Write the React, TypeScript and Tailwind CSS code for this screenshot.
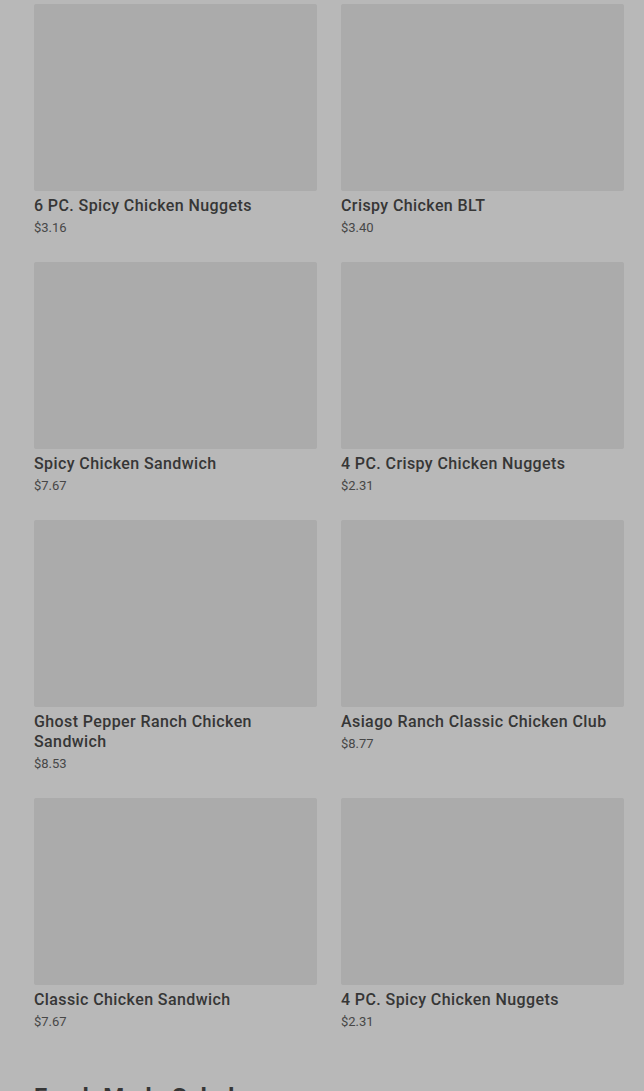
const items = [
  { name: "6 PC. Spicy Chicken Nuggets", price: "$3.16" },
  { name: "Crispy Chicken BLT", price: "$3.40" },
  { name: "Spicy Chicken Sandwich", price: "$7.67" },
  { name: "4 PC. Crispy Chicken Nuggets", price: "$2.31" },
  { name: "Ghost Pepper Ranch Chicken Sandwich", price: "$8.53" },
  { name: "Asiago Ranch Classic Chicken Club", price: "$8.77" },
  { name: "Classic Chicken Sandwich", price: "$7.67" },
  { name: "4 PC. Spicy Chicken Nuggets", price: "$2.31" },
];

export default function App() {
  return (
    <div
      className="min-h-[1091px] overflow-hidden bg-[#b8b8b8] pl-[34px] pr-[20px] pt-[4px] text-[#363636]"
      style={{ fontFamily: "Roboto, 'Noto Sans', sans-serif" }}
    >
      <div className="grid grid-cols-2 gap-x-[24px] gap-y-[26px]">
        {items.map((item, i) => (
          <div key={i} className="flex flex-col">
            <div className="h-[187px] w-full rounded-[2px] bg-[#ababab]" />
            <h3 className="mt-[5px] text-[16px] font-medium leading-[20px] tracking-[0.4px]">
              {item.name}
            </h3>
            <p className="mt-[4px] text-[13px] leading-[16px] text-[#474747]">
              {item.price}
            </p>
          </div>
        ))}
      </div>
      <h2 className="mt-[51px] text-[24px] font-bold leading-[32px] tracking-[0.5px]">
        Fresh Made Salads
      </h2>
    </div>
  );
}
